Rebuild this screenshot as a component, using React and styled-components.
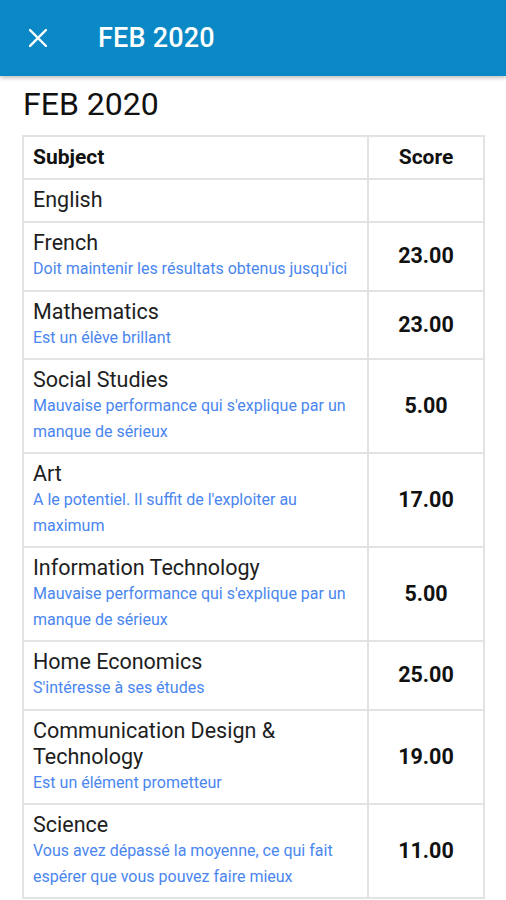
import React from "react"
import styled, { createGlobalStyle } from "styled-components"

const Global = createGlobalStyle`
  body {
    margin: 0;
    background: #ffffff;
    font-family: Roboto, "Liberation Sans", Arial, sans-serif;
  }
`

const Page = styled.div`
  width: 506px;
  height: 900px;
  overflow: hidden;
  background: #fff;
`

const AppBar = styled.header`
  height: 76px;
  background: #0a89c6;
  display: flex;
  align-items: center;
  box-shadow: 0 2px 4px rgba(0, 0, 0, 0.25);
  position: relative;
  z-index: 1;
`

const CloseBtn = styled.button`
  width: 76px;
  height: 76px;
  border: none;
  background: none;
  padding: 0;
  display: flex;
  align-items: center;
  justify-content: center;
`

const BarTitle = styled.h1`
  margin: 0 0 0 22px;
  color: #fff;
  font-size: 27px;
  font-weight: 500;
  letter-spacing: 0.2px;
`

const Content = styled.main`
  padding: 8px 21px 0 22px;
`

const Heading = styled.h2`
  margin: 0 0 11px 1px;
  font-size: 32px;
  font-weight: 400;
  color: #111;
  line-height: 40px;
`

const Table = styled.table`
  width: 100%;
  border-collapse: collapse;
  table-layout: fixed;
  border: 2px solid #e3e3e3;
`

const Th = styled.th`
  border: 2px solid #e3e3e3;
  padding: 7px 9px 8px;
  font-size: 21px;
  font-weight: 700;
  color: #111;
  line-height: 26px;
  text-align: ${p => (p.center ? "center" : "left")};
`

const Td = styled.td`
  border: 2px solid #e3e3e3;
  padding: 7px 9px 8px;
  vertical-align: middle;
  text-align: ${p => (p.center ? "center" : "left")};
`

const Subject = styled.div`
  font-size: 21.5px;
  line-height: 26px;
  color: #1e1e1e;
`

const Remark = styled.div`
  font-size: 16px;
  line-height: 25.5px;
  color: #4a86f0;
`

const Score = styled.span`
  font-size: 21.5px;
  font-weight: 700;
  color: #111;
`

const rows = [
  { subject: "English", remark: "", score: "" },
  { subject: "French", remark: "Doit maintenir les résultats obtenus jusqu'ici", score: "23.00" },
  { subject: "Mathematics", remark: "Est un élève brillant", score: "23.00" },
  { subject: "Social Studies", remark: "Mauvaise performance qui s'explique par un manque de sérieux", score: "5.00" },
  { subject: "Art", remark: "A le potentiel. Il suffit de l'exploiter au maximum", score: "17.00" },
  { subject: "Information Technology", remark: "Mauvaise performance qui s'explique par un manque de sérieux", score: "5.00" },
  { subject: "Home Economics", remark: "S'intéresse à ses études", score: "25.00" },
  { subject: "Communication Design & Technology", remark: "Est un élément prometteur", score: "19.00" },
  { subject: "Science", remark: "Vous avez dépassé la moyenne, ce qui fait espérer que vous pouvez faire mieux", score: "11.00" },
]

export default function App() {
  return (
    <Page>
      <Global />
      <AppBar>
        <CloseBtn aria-label="close">
          <svg width="18" height="18" viewBox="0 0 18 18">
            <path d="M1 1L17 17M17 1L1 17" stroke="#fff" strokeWidth="2.4" strokeLinecap="square" />
          </svg>
        </CloseBtn>
        <BarTitle>FEB 2020</BarTitle>
      </AppBar>
      <Content>
        <Heading>FEB 2020</Heading>
        <Table>
          <colgroup>
            <col />
            <col style={{ width: 116 }} />
          </colgroup>
          <thead>
            <tr>
              <Th>Subject</Th>
              <Th center>Score</Th>
            </tr>
          </thead>
          <tbody>
            {rows.map(r => (
              <tr key={r.subject}>
                <Td>
                  <Subject>{r.subject}</Subject>
                  {r.remark && <Remark>{r.remark}</Remark>}
                </Td>
                <Td center>
                  <Score>{r.score}</Score>
                </Td>
              </tr>
            ))}
          </tbody>
        </Table>
      </Content>
    </Page>
  )
}
